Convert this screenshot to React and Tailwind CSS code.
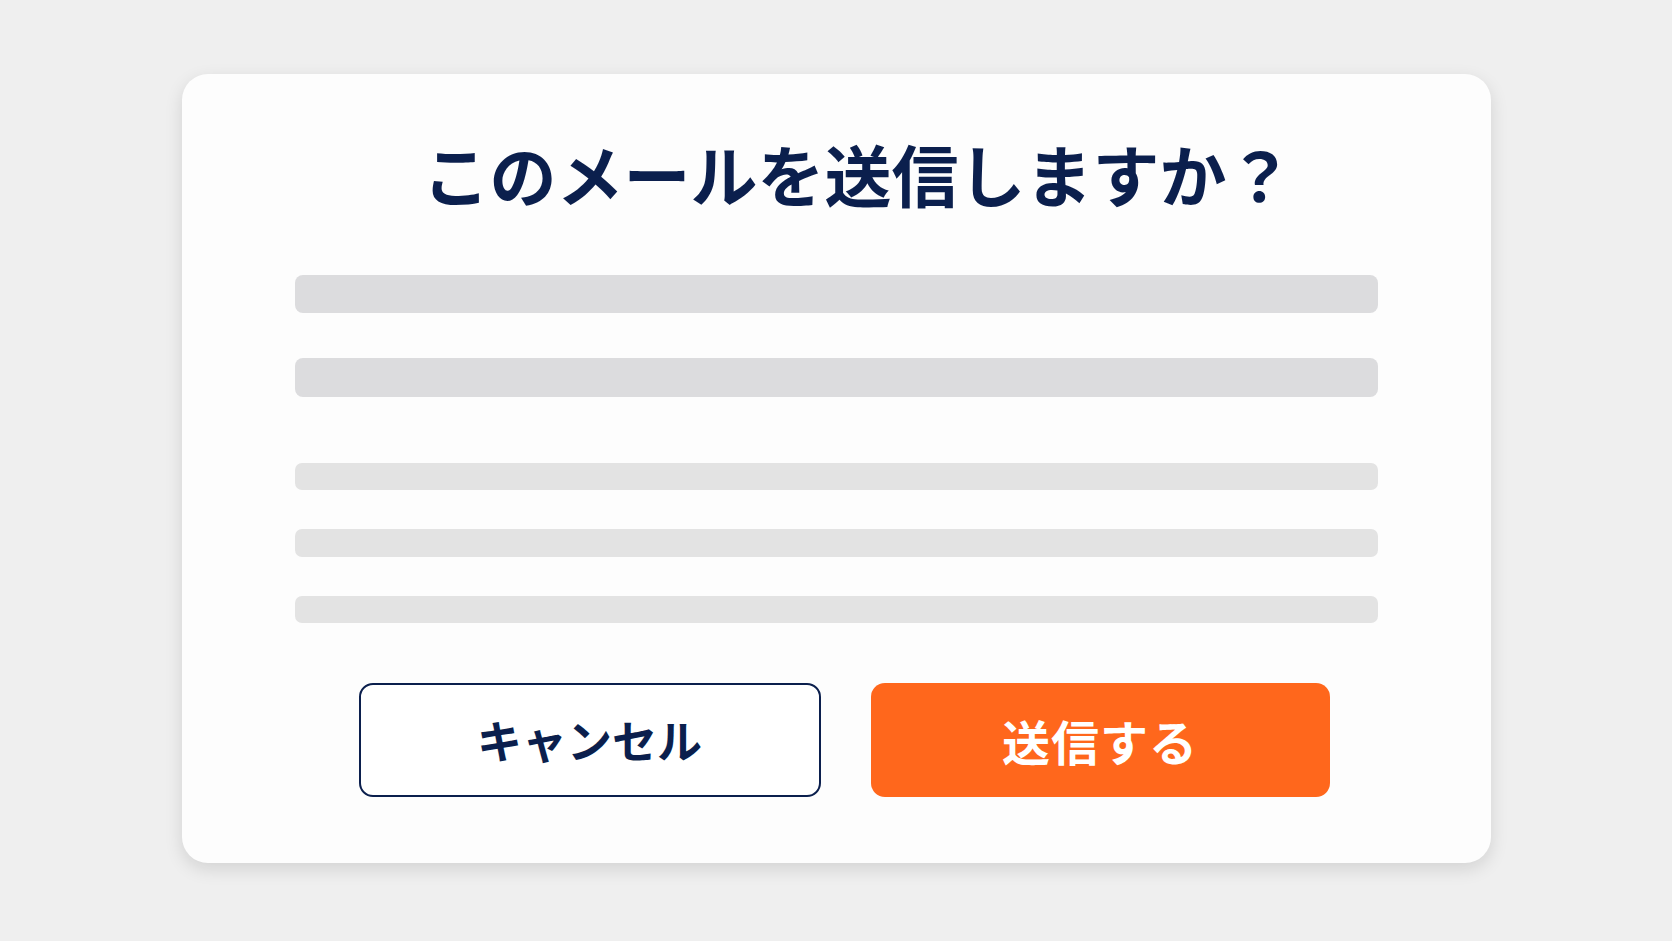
import React from "react";

const font = { fontFamily: '"Noto Sans CJK JP", "Noto Sans", sans-serif' };

const App = () => {
  return (
    <div className="w-full h-[941px] bg-[#efefef] flex justify-center pt-[74px]" style={font}>
      <div className="w-[1309px] h-[789px] bg-[#fdfdfd] rounded-[26px] shadow-[0_6px_18px_rgba(0,0,0,0.12)] flex flex-col">
        <h1 className="mt-[52px] h-[92px] flex items-center justify-center pl-[44px] text-[67px] leading-none font-bold text-[#0b1f4d]">
          このメールを送信しますか？
        </h1>

        <div className="mx-[113px] mt-[57px] flex flex-col">
          <div className="h-[38px] rounded-[8px] bg-[#dcdcde]" />
          <div className="h-[39px] rounded-[8px] bg-[#dcdcde] mt-[45px]" />
          <div className="h-[27px] rounded-[7px] bg-[#e3e3e3] mt-[66px]" />
          <div className="h-[28px] rounded-[7px] bg-[#e3e3e3] mt-[39px]" />
          <div className="h-[27px] rounded-[7px] bg-[#e3e3e3] mt-[39px]" />
        </div>

        <div className="ml-[177px] mt-[60px] flex gap-[50px]">
          <button className="w-[462px] h-[114px] rounded-[14px] border-2 border-[#0b1f4d] bg-white text-[#0b1f4d] text-[45px] font-bold flex items-center justify-center">
            キャンセル
          </button>
          <button className="w-[459px] h-[114px] rounded-[14px] bg-[#ff671c] text-white text-[48px] font-bold tracking-[1px] flex items-center justify-center">
            送信する
          </button>
        </div>
      </div>
    </div>
  );
};

export default App;
